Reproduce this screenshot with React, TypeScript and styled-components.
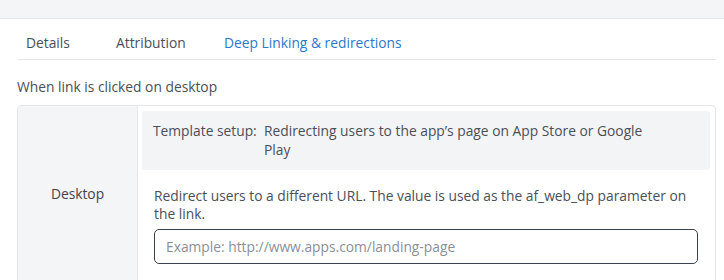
import React from "react";
import styled, { createGlobalStyle } from "styled-components";

const FONT = `"Open Sans", Lato, sans-serif`;
const SIZE = "13.8px";

const Global = createGlobalStyle`
  html, body { margin: 0; padding: 0; background: #fff; }
  body { font-family: ${FONT}; color: #4a4f57; }
  * { box-sizing: border-box; }
`;

const Page = styled.div`
  width: 724px;
  height: 280px;
  overflow: hidden;
  background: #fff;
`;

const TopBand = styled.div`
  height: 19px;
  background: #f4f5f7;
  border-bottom: 1px solid #e6e8eb;
`;

const Content = styled.div`
  padding: 0 8px 0 17px;
`;

const Tabs = styled.div`
  display: flex;
  height: 41px;
  align-items: center;
  margin-left: 1px;
  padding-left: 8px;
  border-bottom: 1px solid #e3e5e8;
  padding-top: 6px;
`;

const Tab = styled.div<{ $active?: boolean; $w: number }>`
  width: ${(p) => p.$w}px;
  font-size: ${SIZE};
  color: ${(p) => (p.$active ? "#2a78cb" : "#4a4f57")};
`;

const Heading = styled.div`
  font-size: ${SIZE};
  color: #4a4f57;
  margin-top: 17px;
  height: 19px;
  line-height: 19px;
`;

const Card = styled.div`
  margin-top: 9px;
  width: 699px;
  border: 1px solid #e6e8eb;
  border-radius: 4px;
  display: flex;
  height: 200px;
  overflow: hidden;
`;

const SideLabel = styled.div`
  width: 120px;
  flex-shrink: 0;
  background: #f4f5f7;
  border-right: 1px solid #e6e8eb;
  display: flex;
  align-items: center;
  justify-content: center;
  font-size: ${SIZE};
  color: #3f444c;
  padding-bottom: 23px;
`;

const Body = styled.div`
  flex: 1;
  min-width: 0;
  padding: 5px 5px 0 4px;
`;

const TemplateBox = styled.div`
  background: #f3f4f6;
  border-radius: 3px;
  display: flex;
  padding: 10px 12px 10px 11px;
  height: 59px;
  font-size: ${SIZE};
  line-height: 19px;
  color: #4a4f57;
`;

const TemplateKey = styled.div`
  width: 111px;
  flex-shrink: 0;
`;

const TemplateValue = styled.div`
  width: 385px;
`;

const Field = styled.div`
  padding: 17px 12px 0 12px;
`;

const Desc = styled.div`
  font-size: ${SIZE};
  line-height: 18px;
  color: #4a4f57;
  width: 543px;
`;

const Input = styled.input`
  margin-top: 6px;
  display: block;
  width: 544px;
  height: 35px;
  border: 1px solid #3b434e;
  border-radius: 5px;
  padding: 0 11px;
  font-family: ${FONT};
  font-size: ${SIZE};
  color: #4a4f57;
  outline: none;
  &::placeholder { color: #8a9099; }
`;

export default function App() {
  return (
    <Page>
      <Global />
      <TopBand />
      <Content>
        <Tabs>
          <Tab $w={90}>Details</Tab>
          <Tab $w={108}>Attribution</Tab>
          <Tab $w={200} $active>Deep Linking &amp; redirections</Tab>
        </Tabs>
        <Heading>When link is clicked on desktop</Heading>
        <Card>
          <SideLabel>Desktop</SideLabel>
          <Body>
            <TemplateBox>
              <TemplateKey>Template setup:</TemplateKey>
              <TemplateValue>
                Redirecting users to the app’s page on App Store or Google Play
              </TemplateValue>
            </TemplateBox>
            <Field>
              <Desc>
                Redirect users to a different URL. The value is used as the af_web_dp parameter on
                the link.
              </Desc>
              <Input placeholder="Example: http://www.apps.com/landing-page" />
            </Field>
          </Body>
        </Card>
      </Content>
    </Page>
  );
}
